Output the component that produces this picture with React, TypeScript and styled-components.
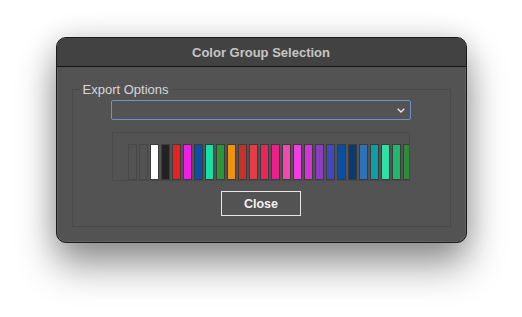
import styled, { createGlobalStyle } from 'styled-components';

const GlobalStyle = createGlobalStyle`
	html, body {
		margin: 0;
		padding: 0;
		background: #ffffff;
	}
	body {
		font-family: "Liberation Sans", Arial, sans-serif;
	}
`;

const Page = styled.div`
	width: 522px;
	height: 317px;
	display: flex;
	justify-content: center;
	align-items: flex-start;
	padding-top: 37px;
	box-sizing: border-box;
	overflow: hidden;
`;

const Window = styled.div`
	width: 411px;
	box-sizing: border-box;
	background: #535353;
	border: 1px solid #1c1c1c;
	border-radius: 10px;
	overflow: hidden;
	box-shadow:
		inset 0 0 0 1px rgba(255, 255, 255, 0.07),
		0 22px 38px rgba(0, 0, 0, 0.42),
		0 0 28px rgba(0, 0, 0, 0.14);
`;

const TitleBar = styled.div`
	height: 28px;
	display: flex;
	align-items: center;
	justify-content: center;
	background: #424242;
	border-bottom: 1px solid #141414;
	color: #c6c6c6;
	font-size: 13px;
	font-weight: bold;
`;

const Body = styled.div`
	padding: 15px;
`;

const Group = styled.fieldset`
	margin: 0;
	padding: 3px 0 10px;
	border: 1px solid #494949;
`;

const GroupLabel = styled.legend`
	margin-left: 7px;
	padding: 0 3px;
	color: #d8d8d8;
	font-size: 13px;
	line-height: 15px;
`;

const GroupContent = styled.div`
	display: flex;
	flex-direction: column;
	align-items: center;
`;

const Dropdown = styled.div`
	width: 300px;
	height: 20px;
	box-sizing: border-box;
	border: 1px solid #6d93c9;
	border-radius: 2px;
	display: flex;
	align-items: center;
	justify-content: flex-end;
	padding-right: 5px;
`;

const SwatchPanel = styled.div`
	margin-top: 12px;
	width: 298px;
	height: 49px;
	box-sizing: border-box;
	border: 1px solid #4a4a4a;
	padding: 11px 0 0 15px;
	display: flex;
	gap: 2px;
	overflow: hidden;
`;

const Swatch = styled.div<{ $color?: string }>`
	flex: 0 0 9px;
	height: 36px;
	box-sizing: border-box;
	border: 1px solid ${(p) => (p.$color ? '#3c3c3c' : '#474747')};
	background: ${(p) => p.$color ?? 'transparent'};
`;

const CloseButton = styled.button`
	margin-top: 10px;
	width: 80px;
	height: 25px;
	box-sizing: border-box;
	background: transparent;
	border: 1px solid #e6e6e6;
	border-radius: 0;
	color: #f2f2f2;
	font-family: "Liberation Sans", Arial, sans-serif;
	font-size: 12.5px;
	font-weight: bold;
	padding: 0;
	cursor: pointer;
`;

const swatches: (string | undefined)[] = [
	undefined,
	undefined,
	'#ffffff',
	'#222222',
	'#e8231f',
	'#f01ee8',
	'#0b50a8',
	'#14e0a8',
	'#2a9838',
	'#f0920e',
	'#c8302a',
	'#e63c48',
	'#e8265a',
	'#ee1f8c',
	'#f04ab0',
	'#f23de4',
	'#d234d6',
	'#8c3cc0',
	'#3f48c0',
	'#0a4ea4',
	'#0b3a6e',
	'#2c74ba',
	'#0e9ea8',
	'#2ee0a4',
	'#20b86c',
	'#2e8c38',
];

const Chevron = () => (
	<svg width="8" height="5" viewBox="0 0 8 5" fill="none">
		<path d="M0.7 0.7 L4 4 L7.3 0.7" stroke="#e8e8e8" strokeWidth="1.3" />
	</svg>
);

export default function App() {
	return (
		<>
			<GlobalStyle />
			<Page>
				<Window>
					<TitleBar>Color Group Selection</TitleBar>
					<Body>
						<Group>
							<GroupLabel>Export Options</GroupLabel>
							<GroupContent>
								<Dropdown>
									<Chevron />
								</Dropdown>
								<SwatchPanel>
									{swatches.map((c, i) => (
										<Swatch key={i} $color={c} />
									))}
								</SwatchPanel>
								<CloseButton>Close</CloseButton>
							</GroupContent>
						</Group>
					</Body>
				</Window>
			</Page>
		</>
	);
}
